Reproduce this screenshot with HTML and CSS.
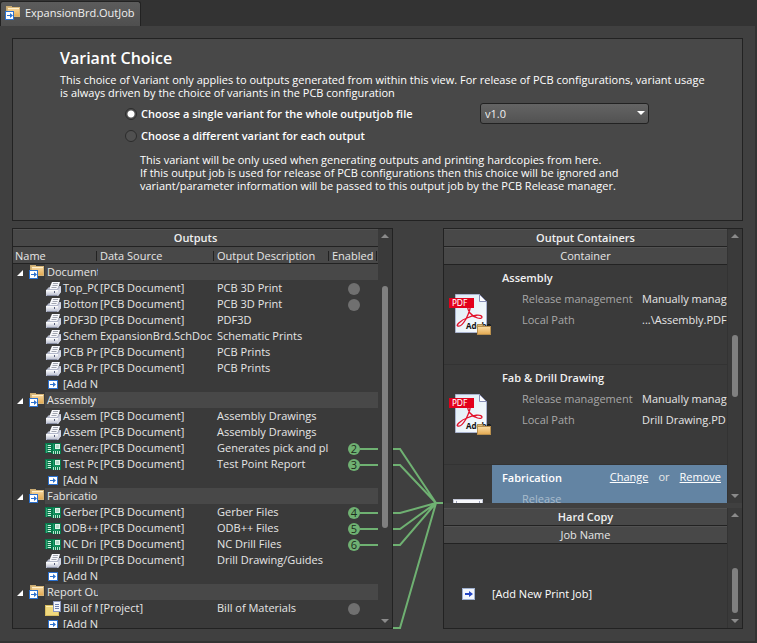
FILE: index.html
```html
<!DOCTYPE html>
<html lang="en">
<head>
  <meta charset="UTF-8" />
  <meta name="viewport" content="width=device-width, initial-scale=1.0" />
  <title>ExpansionBrd.OutJob</title>
  <link rel="stylesheet" href="styles.css">
</head>
<body>
  <!-- Shared icons -->
  <svg class="icon-defs" aria-hidden="true">
    <defs>
      <linearGradient id="folderFill" x1="0" y1="0" x2="0" y2="1">
        <stop offset="0" stop-color="#f8dba4" />
        <stop offset="1" stop-color="#e3a951" />
      </linearGradient>
      <linearGradient id="pageFill" x1="0" y1="0" x2="1" y2="1">
        <stop offset="0" stop-color="#dcebf5" />
        <stop offset="1" stop-color="#fbfdff" />
      </linearGradient>
      <linearGradient id="printerFill" x1="0" y1="0" x2="0" y2="1">
        <stop offset="0" stop-color="#ffffff" />
        <stop offset="1" stop-color="#b4b9cc" />
      </linearGradient>
    </defs>
    <symbol id="icon-folder" viewBox="0 0 16 16">
      <path d="M1 11V1h6v2H3v8z" fill="#c9ab72" />
      <rect x="2.5" y="2.5" width="12" height="9" fill="url(#folderFill)" stroke="#d8b678" />
      <path d="M3 3.5h11" stroke="#fff0cc" />
      <rect x="0.5" y="6.5" width="8" height="8" fill="#fff" stroke="#2b71cf" />
      <path d="M2 10h3V8l3 2.500L5 13v-2H2z" fill="#2b71cf" />
    </symbol>
    <symbol id="icon-printer" viewBox="0 0 16 16">
      <path d="M4 9L7 2h8l-2 7z" fill="#f7f8fb" />
      <path d="M8 3.500h5M7.500 5.500h5M6.500 7.500h5" stroke="#a2a6b1" />
      <path d="M1 10l3-3h1l-1 2h8l2-3h2v6l-3 4z" fill="#b3b8ca" />
      <path d="M13 10l3-4v6l-3 4z" fill="#d3d6e3" />
      <rect x="1" y="10" width="12" height="6" fill="url(#printerFill)" />
      <path d="M2 15.500h10" stroke="#8b91a6" />
      <path d="M9.500 11v2" stroke="#59617c" />
    </symbol>
    <symbol id="icon-board" viewBox="0 0 16 16">
      <rect x="0" y="3" width="16" height="10" fill="#08784a" />
      <path d="M1.500 4v9M1 5.500h2M1 7.500h2M1 9.500h2M1 11.500h2" stroke="#37a579" />
      <path d="M3 5.500h3M3 7.500h3M3 9.500h3M3 11.500h3" stroke="#d4f1e2" />
      <rect x="10" y="4" width="5" height="5" fill="#dff5e9" />
      <rect x="11" y="5" width="3" height="3" fill="#b6d8c8" />
      <path d="M8.500 4v6h6" fill="none" stroke="#1ba36d" />
      <rect x="7" y="11" width="9" height="3" fill="#08784a" />
      <path d="M8.500 11v3M10.500 11v3M12.500 11v3M14.500 11v3" stroke="#b7e5cf" />
    </symbol>
    <symbol id="icon-add" viewBox="0 0 16 16">
      <rect x="3.500" y="4.500" width="9" height="8" fill="#fff" stroke="#2b71cf" />
      <path d="M5 8h3V6l3 2.500L8 11V9H5z" fill="#2b71cf" />
    </symbol>
    <symbol id="icon-report" viewBox="0 0 16 16">
      <rect x="0.500" y="5.500" width="13" height="10" fill="#f0d87d" stroke="#d9bd60" />
      <path d="M1 6.500h7" stroke="#fff0b5" />
      <rect x="8.500" y="1.500" width="7" height="10" fill="#f3f5fb" stroke="#8c97bd" />
      <path d="M10 4.500h4M10 6.500h4M10 8.500h4" stroke="#6e7fae" />
    </symbol>
    <symbol id="icon-pdf" viewBox="0 0 42 44">
      <path d="M6.500 2.500h24l7 7v31h-31z" fill="url(#pageFill)" stroke="#a9b3cf" />
      <path d="M30.500 2.500v7h7z" fill="#fff" stroke="#8990b8" />
      <path d="M9 34c-3 0 3-6 9-8 6-3 14-4 15-1 0 3-8 1-12-4-3-4-3-8-1-8 3 0 0 8-3 14-3 5-6 8-8 7z" fill="none" stroke="#e2112b" stroke-width="1.300" />
      <text x="17" y="37" class="pdf-brand">Adobe</text>
      <rect x="0" y="6" width="25" height="10" fill="#e3001b" />
      <text x="3" y="14" class="pdf-tag">PDF</text>
      <path d="M28.500 42V32.500h5l1 2" fill="#d9b878" stroke="#b08d50" />
      <rect x="28.500" y="34.500" width="13" height="8" fill="url(#folderFill)" stroke="#b98f4c" />
    </symbol>
    <symbol id="arrow-up" viewBox="0 0 8 4"><path d="M4 0l4 4H0z" fill="#8b8b8b" /></symbol>
    <symbol id="arrow-down" viewBox="0 0 8 4"><path d="M0 0h8L4 4z" fill="#8b8b8b" /></symbol>
    <symbol id="toggle" viewBox="0 0 6 6"><path d="M6 0v6H0z" fill="#fff" /></symbol>
  </svg>

  <nav class="tabs">
    <a class="tab" href="#outjob">
      <svg class="icon"><use href="#icon-folder" /></svg>
      ExpansionBrd.OutJob
    </a>
  </nav>

  <main class="page" id="outjob">
    <section class="variant">
      <h1>Variant Choice</h1>
      <p>This choice of Variant only applies to outputs generated from within this view. For release of PCB configurations, variant usage<br>is always driven by the choice of variants in the PCB configuration</p>
      <div class="choices">
        <label class="choice"><input type="radio" name="variant" checked> Choose a single variant for the whole outputjob file</label>
        <div class="select">
          <select aria-label="Variant">
            <option>v1.0</option>
          </select>
        </div>
        <label class="choice"><input type="radio" name="variant"> Choose a different variant for each output</label>
      </div>
      <p class="note">This variant will be only used when generating outputs and printing hardcopies from here.<br>If this output job is used for release of PCB configurations then this choice will be ignored and<br>variant/parameter information will be passed to this output job by the PCB Release manager.</p>
    </section>

    <div class="workspace">
      <section class="panel outputs">
        <div class="panel-main">
          <h2 class="bar title">Outputs</h2>
          <table>
            <colgroup>
              <col class="col-name"><col class="col-source"><col class="col-desc"><col class="col-enabled">
            </colgroup>
            <thead>
              <tr><th>Name</th><th>Data Source</th><th>Output Description</th><th>Enabled</th></tr>
            </thead>
            <tbody>
              <tr class="group"><td><div class="name"><button aria-label="Collapse"><svg><use href="#toggle" /></svg></button><svg class="icon"><use href="#icon-folder" /></svg><span>Document</span></div></td><td colspan="3"></td></tr>
              <tr><td><div class="name"><svg class="icon"><use href="#icon-printer" /></svg><span>Top_PC</span></div></td><td>[PCB Document]</td><td>PCB 3D Print</td><td><div class="state"><i class="dot"></i></div></td></tr>
              <tr><td><div class="name"><svg class="icon"><use href="#icon-printer" /></svg><span>Bottom</span></div></td><td>[PCB Document]</td><td>PCB 3D Print</td><td><div class="state"><i class="dot"></i></div></td></tr>
              <tr><td><div class="name"><svg class="icon"><use href="#icon-printer" /></svg><span>PDF3D</span></div></td><td>[PCB Document]</td><td>PDF3D</td><td></td></tr>
              <tr><td><div class="name"><svg class="icon"><use href="#icon-printer" /></svg><span>Schem</span></div></td><td>ExpansionBrd.SchDoc</td><td>Schematic Prints</td><td></td></tr>
              <tr><td><div class="name"><svg class="icon"><use href="#icon-printer" /></svg><span>PCB Pri</span></div></td><td>[PCB Document]</td><td>PCB Prints</td><td></td></tr>
              <tr><td><div class="name"><svg class="icon"><use href="#icon-printer" /></svg><span>PCB Pri</span></div></td><td>[PCB Document]</td><td>PCB Prints</td><td></td></tr>
              <tr><td><div class="name"><svg class="icon"><use href="#icon-add" /></svg><span>[Add N</span></div></td><td></td><td></td><td></td></tr>

              <tr class="group"><td><div class="name"><button aria-label="Collapse"><svg><use href="#toggle" /></svg></button><svg class="icon"><use href="#icon-folder" /></svg><span>Assembly</span></div></td><td colspan="3"></td></tr>
              <tr><td><div class="name"><svg class="icon"><use href="#icon-printer" /></svg><span>Assem</span></div></td><td>[PCB Document]</td><td>Assembly Drawings</td><td></td></tr>
              <tr><td><div class="name"><svg class="icon"><use href="#icon-printer" /></svg><span>Assem</span></div></td><td>[PCB Document]</td><td>Assembly Drawings</td><td></td></tr>
              <tr><td><div class="name"><svg class="icon"><use href="#icon-board" /></svg><span>Genera</span></div></td><td>[PCB Document]</td><td>Generates pick and pl</td><td><div class="state linked"><i class="dot">2</i></div></td></tr>
              <tr><td><div class="name"><svg class="icon"><use href="#icon-board" /></svg><span>Test Po</span></div></td><td>[PCB Document]</td><td>Test Point Report</td><td><div class="state linked"><i class="dot">3</i></div></td></tr>
              <tr><td><div class="name"><svg class="icon"><use href="#icon-add" /></svg><span>[Add N</span></div></td><td></td><td></td><td></td></tr>

              <tr class="group"><td><div class="name"><button aria-label="Collapse"><svg><use href="#toggle" /></svg></button><svg class="icon"><use href="#icon-folder" /></svg><span>Fabricatio</span></div></td><td colspan="3"></td></tr>
              <tr><td><div class="name"><svg class="icon"><use href="#icon-board" /></svg><span>Gerber</span></div></td><td>[PCB Document]</td><td>Gerber Files</td><td><div class="state linked"><i class="dot">4</i></div></td></tr>
              <tr><td><div class="name"><svg class="icon"><use href="#icon-board" /></svg><span>ODB++</span></div></td><td>[PCB Document]</td><td>ODB++ Files</td><td><div class="state linked"><i class="dot">5</i></div></td></tr>
              <tr><td><div class="name"><svg class="icon"><use href="#icon-board" /></svg><span>NC Dri</span></div></td><td>[PCB Document]</td><td>NC Drill Files</td><td><div class="state linked"><i class="dot">6</i></div></td></tr>
              <tr><td><div class="name"><svg class="icon"><use href="#icon-printer" /></svg><span>Drill Dr</span></div></td><td>[PCB Document]</td><td>Drill Drawing/Guides</td><td></td></tr>
              <tr><td><div class="name"><svg class="icon"><use href="#icon-add" /></svg><span>[Add N</span></div></td><td></td><td></td><td></td></tr>

              <tr class="group"><td><div class="name"><button aria-label="Collapse"><svg><use href="#toggle" /></svg></button><svg class="icon"><use href="#icon-folder" /></svg><span>Report Ou</span></div></td><td colspan="3"></td></tr>
              <tr><td><div class="name"><svg class="icon"><use href="#icon-report" /></svg><span>Bill of M</span></div></td><td>[Project]</td><td>Bill of Materials</td><td><div class="state"><i class="dot"></i></div></td></tr>
              <tr><td><div class="name"><svg class="icon"><use href="#icon-add" /></svg><span>[Add N</span></div></td><td></td><td></td><td></td></tr>
            </tbody>
          </table>
        </div>
        <div class="scroll scroll-outputs">
          <svg><use href="#arrow-up" /></svg>
          <div class="track"><div class="thumb"></div></div>
          <svg><use href="#arrow-down" /></svg>
        </div>
      </section>

      <!-- Links from enabled outputs to the selected container -->
      <svg class="links" viewBox="0 0 50 401" preserveAspectRatio="none">
        <path d="M0 221h7L43 275M0 237h7L43 275M0 285h7L43 275M0 301h7L43 275M0 317h7L43 275M0 400h7L43 275h8" />
      </svg>

      <div class="panel targets">
        <section class="target containers">
          <div class="panel-main">
            <h2 class="bar title">Output Containers</h2>
            <div class="bar">Container</div>
            <article class="item">
              <svg class="pdf"><use href="#icon-pdf" /></svg>
              <div class="item-body">
                <h3>Assembly</h3>
                <dl><dt>Release management</dt><dd>Manually manag</dd><dt>Local Path</dt><dd>...\Assembly.PDF</dd></dl>
              </div>
            </article>
            <article class="item">
              <svg class="pdf"><use href="#icon-pdf" /></svg>
              <div class="item-body">
                <h3>Fab &amp; Drill Drawing</h3>
                <dl><dt>Release management</dt><dd>Manually manag</dd><dt>Local Path</dt><dd>Drill Drawing.PD</dd></dl>
              </div>
            </article>
            <article class="item selected">
              <svg class="pdf" viewBox="0 0 42 44"><rect x="4.500" y="7.500" width="29" height="34" fill="#f7f8fb" stroke="#c2c6d6" /><path d="M7.500 9v3M30.500 9v3" stroke="#9aa0b8" /></svg>
              <div class="item-body">
                <div class="item-head">
                  <h3>Fabrication</h3>
                  <div class="actions"><a href="#change">Change</a><span>or</span><a href="#remove">Remove</a></div>
                </div>
                <dl><dt>Release</dt><dd></dd></dl>
              </div>
            </article>
          </div>
          <div class="scroll scroll-containers">
            <svg><use href="#arrow-up" /></svg>
            <div class="track"><div class="thumb"></div></div>
            <svg><use href="#arrow-down" /></svg>
          </div>
        </section>
        <section class="target hardcopy">
          <div class="panel-main">
            <h2 class="bar title">Hard Copy</h2>
            <div class="bar">Job Name</div>
            <button class="add-job">
              <svg viewBox="0 0 13 12"><rect x=".5" y=".5" width="12" height="11" fill="#f2f6fd" stroke="#9fb0d0" /><path d="M3 5h4V3l4 3-4 3V7H3z" fill="#2445c4" /></svg>
              [Add New Print Job]
            </button>
          </div>
          <div class="scroll scroll-hardcopy">
            <svg><use href="#arrow-up" /></svg>
            <div class="track"><div class="thumb"></div></div>
            <svg><use href="#arrow-down" /></svg>
          </div>
        </section>
      </div>
    </div>
  </main>
</body>
</html>
```
FILE: styles.css
```css
* {
  box-sizing: border-box;
}
body {
  margin: 0;
  height: 100vh;
  display: flex;
  flex-direction: column;
  overflow: hidden;
  background: #404040;
  color: #e6e6e6;
  font: 11px/16px "Open Sans", "Noto Sans", sans-serif;
}
h1, h2, h3, p, dl, dd {
  margin: 0;
  font-size: inherit;
}
button {
  padding: 0;
  border: 0;
  background: none;
  color: inherit;
  font: inherit;
  cursor: pointer;
}
svg {
  display: block;
  flex: none;
}
.icon-defs {
  position: absolute;
  width: 0;
  height: 0;
}
.icon {
  width: 16px;
  height: 16px;
}

/* Document tabs */
.tabs {
  flex: none;
  display: flex;
  height: 26px;
  padding: 1px 0 0 0;
  background: #333;
}
.tab {
  display: flex;
  align-items: center;
  gap: 4px;
  padding: 0 5px 2px 4px;
  border: 1px solid #222;
  border-bottom: 0;
  border-radius: 3px 3px 0 0;
  background: linear-gradient(#5c5c5c, #4f4f4f);
  color: #f0f0f0;
  text-decoration: none;
}
.page {
  flex: 1;
  min-height: 0;
  display: flex;
  flex-direction: column;
  gap: 7px;
  padding: 12px;
  border: solid #333;
  border-width: 0 2px 2px 0;
}

/* Variant choice */
.variant {
  flex: none;
  padding: 9px 20px 28px 47px;
  border: 1px solid #222;
  background: #484848;
  color: #fff;
  line-height: 13px;
  white-space: nowrap;
}
.variant h1 {
  margin-bottom: 5px;
  font-size: 16px;
  font-weight: 600;
  line-height: 20px;
}
.choices {
  display: grid;
  grid-template-columns: 355px 169px;
  row-gap: 1px;
  margin: 4px 0 7px 65px;
}
.choice {
  display: flex;
  align-items: center;
  gap: 4px;
  height: 21px;
  font-weight: 600;
}
.choice input {
  appearance: none;
  width: 12px;
  height: 12px;
  margin: 0;
  border: 1px solid #2c2c2c;
  border-radius: 50%;
  background: #505050;
}
.choice input:checked {
  background: radial-gradient(circle, #fff 3px, #505050 4px);
}
.select {
  position: relative;
}
.select select {
  appearance: none;
  width: 100%;
  height: 21px;
  padding: 0 4px;
  border: 1px solid #222;
  border-radius: 3px;
  background: linear-gradient(#646464, #525252);
  color: #f0f0f0;
  font: inherit;
}
.select::after {
  content: "";
  position: absolute;
  right: 4px;
  top: 8px;
  border: 4px solid transparent;
  border-top-color: #fff;
  border-bottom: 0;
  pointer-events: none;
}
.note {
  padding-left: 80px;
}

/* Panels */
.workspace {
  flex: 1;
  min-height: 0;
  display: grid;
  grid-template-columns: 381fr 50px 300fr;
  grid-template-rows: 100%;
}
.panel {
  min-width: 0;
  display: flex;
  border: 1px solid #222;
  background: #3a3a3a;
}
.panel-main {
  flex: 1;
  min-width: 0;
  overflow: hidden;
}
.bar {
  height: 18px;
  border-top: 1px solid #525252;
  border-bottom: 1px solid #222;
  background: #484848;
  text-align: center;
  line-height: 16px;
}
.title {
  color: #f0f0f0;
  font-weight: 600;
}
.targets {
  flex-direction: column;
}
.target {
  display: flex;
  min-height: 0;
}

/* Outputs table */
table {
  width: 100%;
  border-collapse: collapse;
  table-layout: fixed;
}
.col-name {
  width: 85px;
}
.col-source {
  width: 117px;
}
.col-enabled {
  width: 48px;
}
th, td {
  padding: 0 0 0 2px;
  overflow: hidden;
  text-align: left;
  font-weight: normal;
  white-space: nowrap;
}
th {
  height: 17px;
  background: linear-gradient(#222, #222) right 1px center / 1px 10px no-repeat #484848;
  box-shadow: inset 0 -1px #222;
  line-height: 17px;
}
td {
  height: 16px;
  line-height: 16px;
}
td:first-child {
  padding: 0;
}
.name {
  display: flex;
  height: 16px;
  padding-left: 32px;
  overflow: hidden;
}
.name span {
  flex: 1;
  min-width: 0;
  padding-left: 2px;
  overflow: hidden;
}
.group .name {
  padding-left: 4px;
}
.group button {
  width: 12px;
}
.group button svg {
  width: 6px;
  height: 6px;
  margin-top: 2px;
}
.group td {
  background: #484848;
}
.group td:first-child {
  background: linear-gradient(90deg, #3a3a3a 32px, #484848 32px);
}
.state {
  display: flex;
  align-items: center;
  padding: 2px 0 0 16px;
}
.dot {
  width: 12px;
  height: 12px;
  border-radius: 50%;
  background: #707070;
  color: #1c2c1c;
  font-style: normal;
  line-height: 12px;
  text-align: center;
}
.linked .dot {
  background: #6fb172;
}
.linked::after {
  content: "";
  flex: 1;
  height: 2px;
  background: #6fb172;
}
.links {
  width: 100%;
  height: 401px;
}
.links path {
  fill: none;
  stroke: #6fb172;
  stroke-width: 2px;
}

/* Scroll bars */
.scroll {
  flex: none;
  width: 14px;
  display: flex;
  flex-direction: column;
  align-items: center;
  padding: 5px 0;
  gap: 5px;
}
.scroll svg {
  width: 8px;
  height: 4px;
}
.track {
  flex: 1;
  display: flex;
  flex-direction: column;
}
.track::before, .track::after {
  content: "";
}
.thumb {
  width: 6px;
  border-radius: 3px;
  background: #808080;
}
.scroll-outputs .track::before {
  flex: 43;
}
.scroll-outputs .thumb {
  flex: 240;
}
.scroll-outputs .track::after {
  flex: 85;
}
.scroll-containers .track::before {
  flex: 91;
}
.scroll-containers .thumb {
  flex: 62;
}
.scroll-containers .track::after {
  flex: 91;
}
.scroll-hardcopy .track::before {
  flex: 45;
}
.scroll-hardcopy .thumb {
  flex: 45;
}
.scroll-hardcopy .track::after {
  flex: 1;
}

/* Output containers */
.containers {
  flex: 1;
}
.targets .panel-main {
  border-right: 1px solid #333;
}
.item {
  display: flex;
  height: 100px;
  border-bottom: 1px solid #333;
  white-space: nowrap;
}
.pdf {
  width: 42px;
  height: 44px;
  margin: 27px 1px 0 5px;
}
.item-body {
  flex: 1;
  min-width: 0;
  padding: 5px 0 0 10px;
  overflow: hidden;
}
.item h3 {
  color: #f0f0f0;
  font-weight: 600;
}
.item dl {
  display: grid;
  grid-template-columns: 120px 1fr;
  padding: 2px 0 0 20px;
  line-height: 21px;
}
.item dt {
  color: #a8a8a8;
}
.selected .item-body {
  background: #6384a3;
}
.item-head {
  display: flex;
  justify-content: space-between;
  padding-right: 6px;
}
.actions {
  display: flex;
  gap: 10px;
  line-height: 13px;
}
.actions a {
  color: #fff;
}
.selected h3 {
  color: #fff;
}
.selected dt {
  color: #a9bccd;
}

/* Hard copy */
.hardcopy {
  flex: none;
  border-top: 5px solid #404040;
}
.add-job {
  display: flex;
  align-items: center;
  gap: 17px;
  width: 100%;
  padding: 42px 18px 26px;
  color: #fff;
}
.add-job svg {
  width: 13px;
  height: 12px;
}
.pdf-brand {
  fill: #111;
  font: bold 8px "Open Sans", sans-serif;
  font-stretch: normal;
}
.pdf-tag {
  fill: #fff;
  font: 8px "DejaVu Sans", sans-serif;
}
```
